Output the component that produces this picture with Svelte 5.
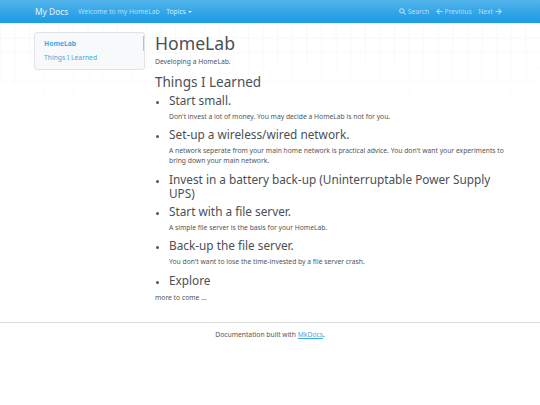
<script>
  const leftLinks = ['Welcome to my HomeLab'];
  const sections = [
    { title: 'Start small.', text: ["Don't invest a lot of money. You may decide a HomeLab is not for you."] },
    {
      title: 'Set-up a wireless/wired network.',
      text: [
        "A network seperate from your main home network is practical advice. You don't want your experiments to",
        'bring down your main network.'
      ]
    },
    { title: 'Invest in a battery back-up (Uninterruptable Power Supply UPS)', text: [] },
    { title: 'Start with a file server.', text: ['A simple file server is the basis for your HomeLab.'] },
    { title: 'Back-up the file server.', text: ["You don't want to lose the time-invested by a file server crash."] },
    { title: 'Explore', text: [] }
  ];
</script>

<header class="navbar">
  <a class="brand" href="#top">My Docs</a>
  <nav class="nav-left">
    {#each leftLinks as link}
      <a href="#top">{link}</a>
    {/each}
    <a class="active" href="#top">Topics <span class="caret"></span></a>
  </nav>
  <nav class="nav-right">
    <a href="#top">
      <svg width="7" height="7" viewBox="0 0 16 16" fill="none" stroke="currentColor" stroke-width="2.4">
        <circle cx="6.5" cy="6.5" r="5" />
        <path d="M10.2 10.2 15 15" />
      </svg>
      Search
    </a>
    <a href="#top">
      <svg width="7" height="7" viewBox="0 0 16 16" fill="none" stroke="currentColor" stroke-width="2.4">
        <path d="M15 8H2M8 2 2 8l6 6" />
      </svg>
      Previous
    </a>
    <a href="#top">
      Next
      <svg width="7" height="7" viewBox="0 0 16 16" fill="none" stroke="currentColor" stroke-width="2.4">
        <path d="M1 8h13M8 2l6 6-6 6" />
      </svg>
    </a>
  </nav>
</header>

<div class="page">
  <div class="grid-bg"></div>
  <aside class="sidebar">
    <a class="side-link current" href="#top">HomeLab</a>
    <a class="side-link" href="#top">Things I Learned</a>
    <span class="scroll-mark"></span>
  </aside>
  <main class="content">
    <h1>HomeLab</h1>
    <p class="intro">Developing a HomeLab.</p>
    <h2>Things I Learned</h2>
    <ul>
      {#each sections as section}
        <li>
          <h3>{section.title}</h3>
          {#if section.text.length}
            <p>
              {#each section.text as line, i}
                {line}{#if i < section.text.length - 1}<br />{/if}
              {/each}
            </p>
          {/if}
        </li>
      {/each}
    </ul>
    <p class="more">more to come ...</p>
  </main>
</div>

<footer>
  <hr />
  <p>Documentation built with <a href="#top">MkDocs</a>.</p>
</footer>

<style>
  :global(body) {
    margin: 0;
    background: #fff;
    color: #50565c;
    font-family: 'Noto Sans', sans-serif;
    font-size: 6.75px;
    line-height: 10px;
    overflow: hidden;
  }

  a {
    text-decoration: none;
  }

  .navbar {
    height: 23px;
    display: flex;
    align-items: center;
    padding: 0 38px 0 35px;
    background: linear-gradient(#54b4eb, #2fa4e7 60%, #1d9ce5);
    box-sizing: border-box;
  }

  .brand {
    color: #e6f4fd;
    font-size: 8.4px;
    margin-right: 10px;
  }

  .nav-left,
  .nav-right {
    display: flex;
    align-items: center;
    gap: 6.5px;
  }

  .nav-left a,
  .nav-right a {
    color: #b5def7;
    display: flex;
    align-items: center;
    gap: 2px;
  }

  .nav-left a.active {
    color: #d8eefc;
  }

  .nav-right {
    margin-left: auto;
  }

  .caret {
    display: inline-block;
    margin-left: 0;
    border-top: 2px solid currentColor;
    border-left: 2px solid transparent;
    border-right: 2px solid transparent;
  }

  .page {
    position: relative;
    display: flex;
    padding: 9px 35px 0 34px;
  }

  .grid-bg {
    position: absolute;
    inset: 0 0 auto 0;
    height: 100px;
    background-image:
      linear-gradient(#f6f7f8 1px, transparent 1px),
      linear-gradient(90deg, #f6f7f8 1px, transparent 1px);
    background-size: 14.6px 14.6px;
    mask-image: linear-gradient(#000, transparent);
  }

  .sidebar {
    position: relative;
    flex: none;
    width: 111px;
    height: 37.5px;
    box-sizing: border-box;
    padding: 6px 9px;
    display: flex;
    flex-direction: column;
    gap: 4px;
    background: #f7f9fb;
    border: 1px solid #dfe4e8;
    border-radius: 3px;
  }

  .side-link {
    color: #3fa9e8;
  }

  .side-link.current {
    font-weight: 700;
  }

  .scroll-mark {
    position: absolute;
    top: 3px;
    right: 0;
    width: 1px;
    height: 15px;
    background: #a9c5d8;
  }

  .content {
    position: relative;
    flex: 1;
    margin-left: 10px;
    min-width: 0;
  }

  h1,
  h2,
  h3 {
    margin: 0;
    font-weight: 400;
    color: #495057;
  }

  h1 {
    font-size: 17.6px;
    line-height: 21px;
    margin-bottom: 3px;
    padding-top: 0.5px;
  }

  h2 {
    font-size: 13.5px;
    line-height: 16px;
    margin-bottom: 3px;
  }

  h3 {
    font-size: 11.8px;
    line-height: 14px;
    margin-bottom: 5px;
  }

  h3:last-child {
    margin-bottom: 4px;
  }

  p {
    margin: 0;
  }

  .intro {
    margin-bottom: 7px;
  }

  ul {
    margin: 0 0 6.5px;
    padding-left: 14px;
    font-size: 9px;
  }

  li p {
    font-size: 6.75px;
    margin-bottom: 5.5px;
  }

  footer {
    margin-top: 19px;
  }

  hr {
    margin: 0;
    border: 0;
    border-top: 1px solid #d9dadb;
  }

  footer p {
    margin-top: 7px;
    text-align: center;
  }

  footer a {
    color: #3fa9e8;
    text-decoration: underline;
  }
</style>
